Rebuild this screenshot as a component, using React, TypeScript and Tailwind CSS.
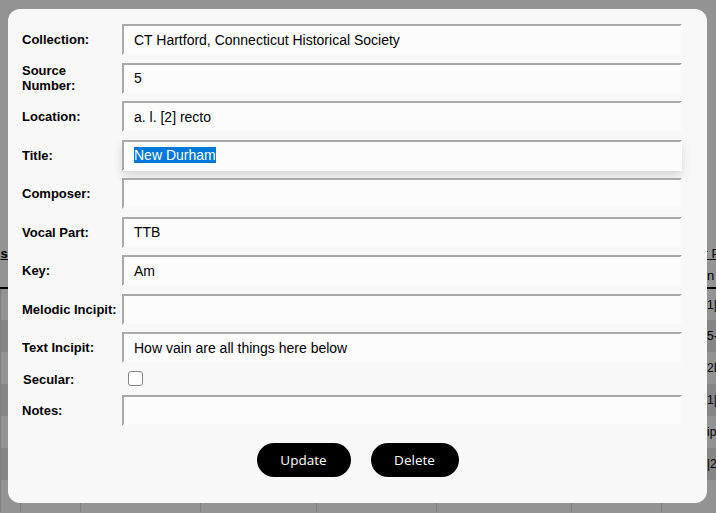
import { useState } from "react";

const fields = [
  { label: "Collection:", value: "CT Hartford, Connecticut Historical Society" },
  { label: "Source Number:", value: "5" },
  { label: "Location:", value: "a. l. [2] recto" },
  { label: "Title:", value: "New Durham", selected: true },
  { label: "Composer:", value: "" },
  { label: "Vocal Part:", value: "TTB" },
  { label: "Key:", value: "Am" },
  { label: "Melodic Incipit:", value: "" },
  { label: "Text Incipit:", value: "How vain are all things here below" },
];

const rows = ["1|D", "5-3", "2D", "1|I", "ipi", "|2", ""];

const inputCls =
  "h-[31px] w-full border-2 border-t-[#a9a9a9] border-l-[#a9a9a9] border-r-[#fafafa] border-b-[#fafafa] bg-[#fcfcfc] px-[10px] text-[14px] text-black outline-none";

function BackgroundTable() {
  return (
    <div className="pt-[240px] font-['Liberation_Sans',Arial,sans-serif] text-[13px] text-black">
      <table className="w-[716px] table-fixed border-collapse">
        <colgroup>
          <col className="w-[20px]" />
          <col className="w-[60px]" />
          <col className="w-[120px]" />
          <col className="w-[116px]" />
          <col className="w-[120px]" />
          <col className="w-[135px]" />
          <col className="w-[90px]" />
          <col className="w-[55px]" />
        </colgroup>
        <thead>
          <tr className="h-[48px] border-b-2 border-black align-top">
            <th className="pt-[4px] text-left font-bold">
              <span className="underline">s</span>
            </th>
            <th></th>
            <th></th>
            <th></th>
            <th></th>
            <th></th>
            <th></th>
            <th className="whitespace-nowrap pl-[42px] pt-[3px] text-left font-normal leading-[22px]">
              <span className="underline">r P</span>
              <br />
              In
            </th>
          </tr>
        </thead>
        <tbody>
          {rows.map((r, i) => (
            <tr key={i} className={i % 2 ? "h-[32px] bg-[#e8e8e8]" : "h-[32px] bg-white"}>
              <td className="border-x border-[#dddddd]"></td>
              <td className="border-x border-[#dddddd]"></td>
              <td className="border-x border-[#dddddd]"></td>
              <td className="border-x border-[#dddddd]"></td>
              <td className="border-x border-[#dddddd]"></td>
              <td className="border-x border-[#dddddd]"></td>
              <td className="border-x border-[#dddddd]"></td>
              <td className="overflow-hidden whitespace-nowrap border-x border-[#dddddd] pl-[45px] text-[12px]">
                {r}
              </td>
            </tr>
          ))}
        </tbody>
      </table>
    </div>
  );
}

export default function App() {
  const [secular, setSecular] = useState(false);

  return (
    <div className="relative h-[513px] w-[716px] overflow-hidden bg-white">
      <BackgroundTable />
      <div className="absolute inset-0 flex bg-black/[0.425] pl-[8px] pt-[9px]">
        <div className="h-[494px] w-[699px] rounded-xl bg-[#f8f8f8] pl-[14px] pt-[15px] font-['Liberation_Sans',Arial,sans-serif]">
          <div className="grid grid-cols-[100px_560px] items-center gap-y-[7.5px]">
            {fields.map((f) => (
              <div key={f.label} className="contents">
                <label className="text-[13px] font-bold leading-[15px] text-black">
                  {f.label}
                </label>
                {f.selected ? (
                  <div
                    className={
                      inputCls +
                      " flex items-center shadow-[0_5px_9px_rgba(0,0,0,0.13)]"
                    }
                  >
                    <span className="bg-[#0078d7] leading-[16px] text-white">
                      {f.value}
                    </span>
                  </div>
                ) : (
                  <input className={inputCls} defaultValue={f.value} />
                )}
              </div>
            ))}
            <label className="pl-[1px] text-[13px] font-bold leading-[15px] text-black">
              Secular:
            </label>
            <div className="flex h-[17px] items-start pl-[6px]">
              <input
                type="checkbox"
                checked={secular}
                onChange={(e) => setSecular(e.target.checked)}
                className="h-[15px] w-[15px] appearance-none rounded-[3px] border border-[#858585] bg-white"
              />
            </div>
            <label className="text-[13px] font-bold leading-[15px] text-black">
              Notes:
            </label>
            <input className={inputCls + " h-[30px]"} />
          </div>
          <div className="mt-[17px] flex justify-center gap-5 pr-[14px] font-['Open_Sans',sans-serif] text-[13.5px] text-white">
            <button className="h-[34px] w-[94px] rounded-full bg-black">Update</button>
            <button className="h-[34px] w-[88px] rounded-full bg-black">Delete</button>
          </div>
        </div>
      </div>
    </div>
  );
}
